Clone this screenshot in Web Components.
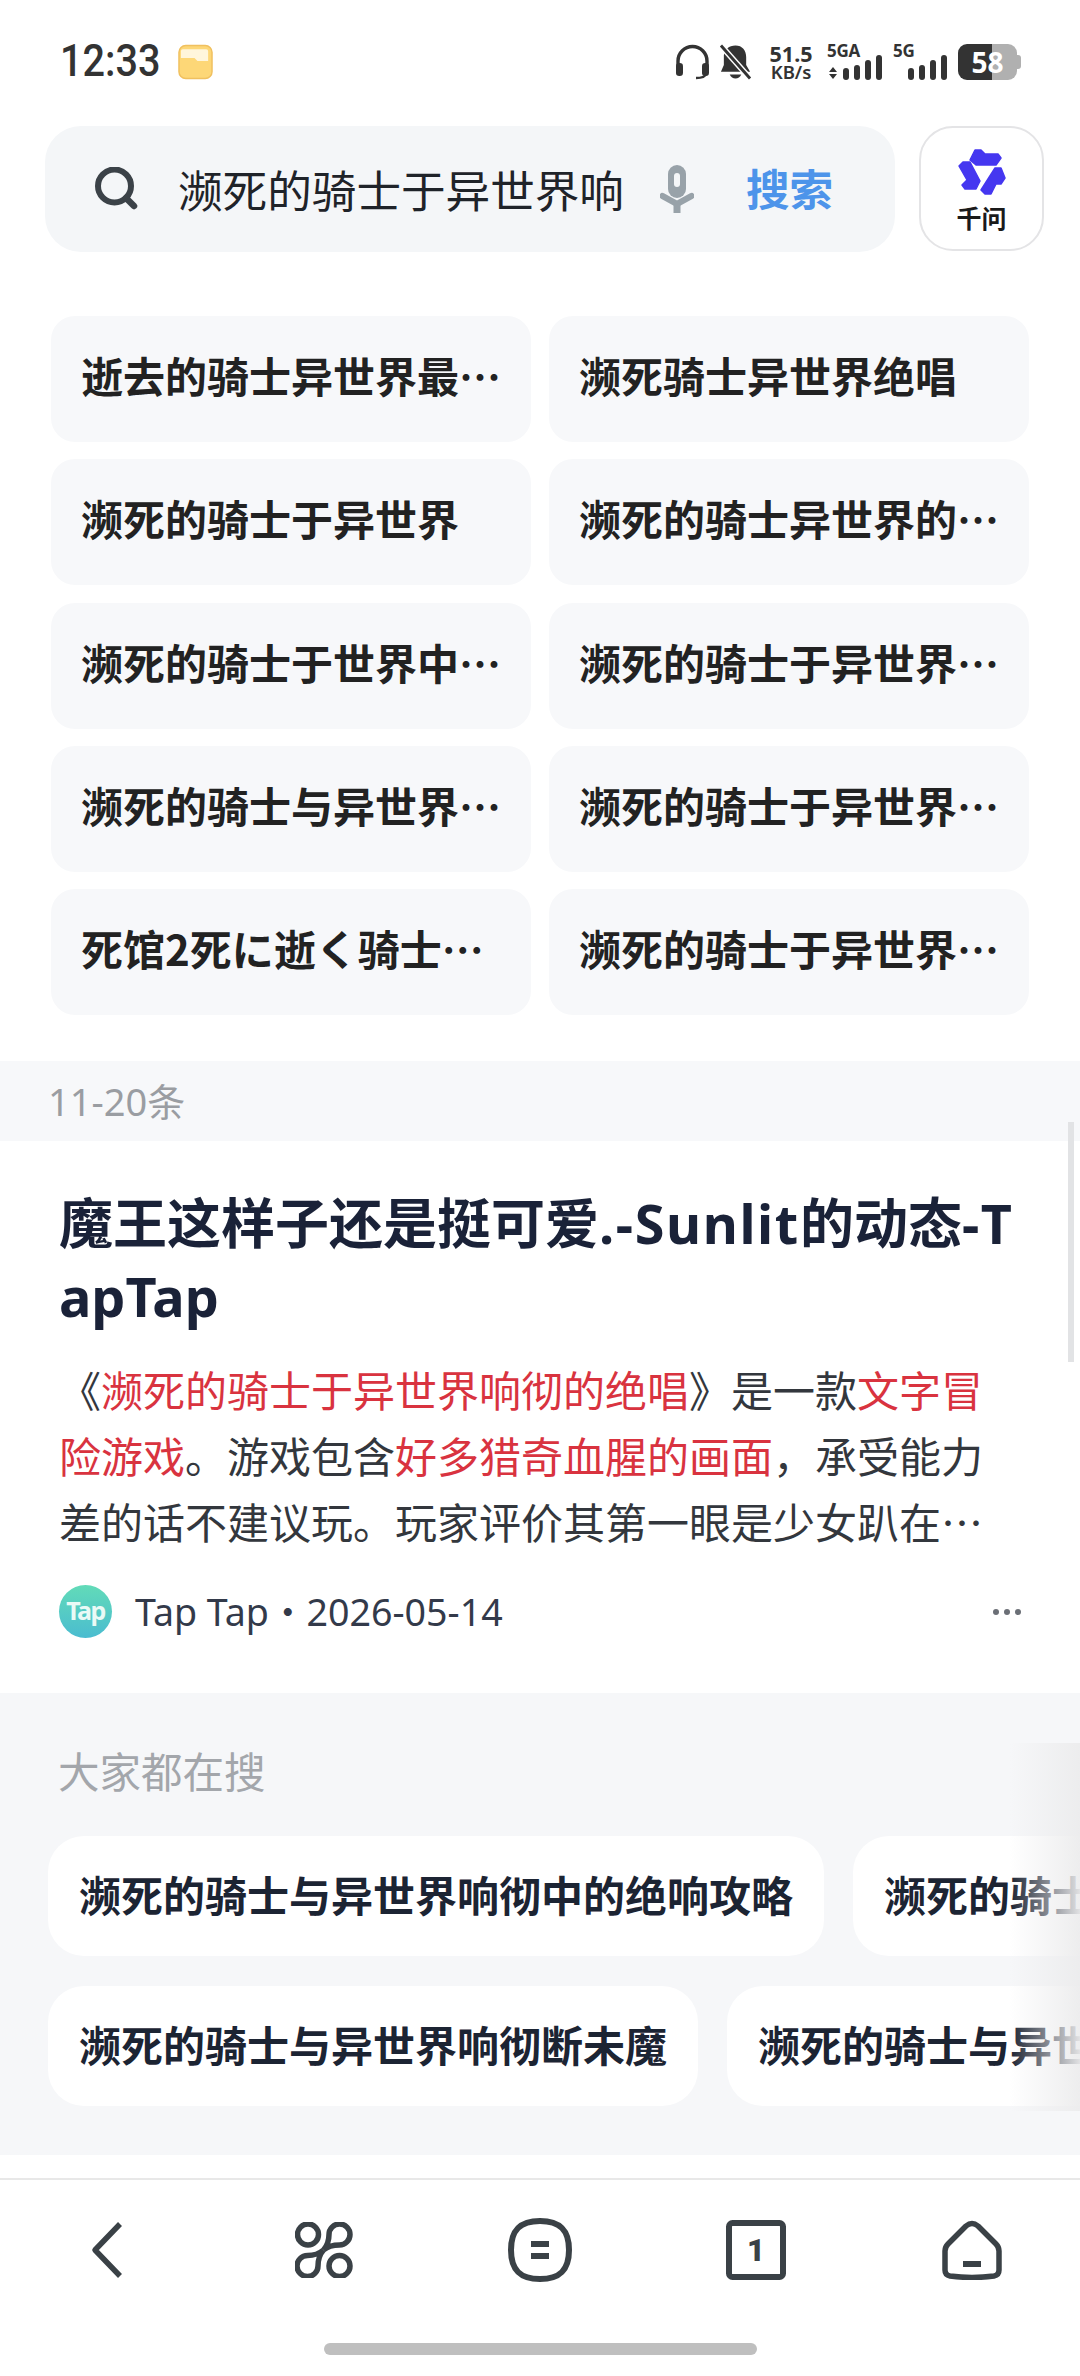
<!DOCTYPE html>
<html lang="zh-CN">
<head>
<meta charset="utf-8">
<style>
  html, body { margin: 0; padding: 0; background: #fff; }
  body { width: 1080px; height: 2376px; overflow: hidden; font-family: "Noto Sans", "Noto Sans CJK SC", sans-serif; }
  results-page { height: 2376px; }
</style>
</head>
<body>
<results-page>
  <status-bar slot="status"></status-bar>
  <search-bar slot="search"></search-bar>
  <related-grid slot="related">
    <rel-chip>逝去的骑士异世界最终绝响</rel-chip>
    <rel-chip>濒死骑士异世界绝唱</rel-chip>
    <rel-chip>濒死的骑士于异世界</rel-chip>
    <rel-chip>濒死的骑士异世界的绝响攻略</rel-chip>
    <rel-chip>濒死的骑士于世界中的绝响</rel-chip>
    <rel-chip>濒死的骑士于异世界响彻的绝唱</rel-chip>
    <rel-chip>濒死的骑士与异世界响彻绝唱</rel-chip>
    <rel-chip>濒死的骑士于异世界响彻攻略</rel-chip>
    <rel-chip>死馆2死に逝く骑士异世界</rel-chip>
    <rel-chip>濒死的骑士于异世界响彻下载</rel-chip>
  </related-grid>
  <page-divider slot="divider">11-20条</page-divider>
  <result-card slot="card"></result-card>
  <hot-search slot="hot"></hot-search>
  <bottom-nav slot="nav"></bottom-nav>
</results-page>

<script>
// page shell, stacks every section top to bottom
class ResultsPage extends HTMLElement {
  constructor() {
    super();
    this.attachShadow({ mode: 'open' });
    this.shadowRoot.innerHTML = `
    <style>
      :host { display: flex; flex-direction: column; width: 1080px; background: #fff; position: relative; }
      .grow { flex: 1; background: #fff; }
      .scroll { position: absolute; right: 6px; top: 1122px; width: 6px; height: 240px; background: #e2e3e5; }
    </style>
    <slot name="status"></slot>
    <slot name="search"></slot>
    <slot name="related"></slot>
    <slot name="divider"></slot>
    <slot name="card"></slot>
    <slot name="hot"></slot>
    <div class="grow"></div>
    <slot name="nav"></slot>
    <div class="scroll"></div>
    `;
  }
}

class StatusBar extends HTMLElement {
  constructor() {
    super();
    this.attachShadow({ mode: 'open' });
    this.shadowRoot.innerHTML = `
    <style>
      :host { display: flex; align-items: center; height: 126px; box-sizing: border-box; padding: 0 59px 2px 60px; color: #333; }
      .time { font: 500 39.6px/1 Roboto, sans-serif; color: #333; transform: scaleY(1.1); }
      .left { display: flex; align-items: center; gap: 18px; }
      .right { margin-left: auto; display: flex; align-items: center; }
      .speed { display: flex; flex-direction: column; width: 44px; align-items: center; margin-left: 17px; color: #333; }
      .speed b { font: 700 21.5px/20px "Noto Sans", sans-serif; }
      .speed span { font: 600 18.5px/16px "Noto Sans", sans-serif; }
      .net { position: relative; height: 36px; }
      .net span { position: absolute; left: 0; top: -3px; font: 700 17px/20px "Noto Sans", sans-serif; color: #333; letter-spacing: -.3px; }
      .batt { width: 59px; height: 36px; border-radius: 9px; margin-left: 11px; background: linear-gradient(90deg, #333 0 34px, #b0b0b0 34px); display: flex; align-items: center; justify-content: center; font: 700 28px/1 "Noto Sans", sans-serif; color: #fff; }
      .nub { width: 4px; height: 14px; background: #b0b0b0; border-radius: 0 3px 3px 0; }
      svg { display: block; }
    </style>
    <div class="left">
      <div class="time">12:33</div>
      <svg width="35" height="36" viewBox="0 0 36 36">
        <rect x="1" y="1" width="34" height="34" rx="7" fill="#fdd777" stroke="#f0c05f" stroke-width="1.5"/>
        <path d="M5 5 h24 q2 0 2 2 v10 h-11 l-3-3 h-14 v-7 q0-2 2-2z" fill="#fff6dc"/>
      </svg>
    </div>
    <div class="right">
      <svg width="35" height="36" viewBox="0 0 35 36" fill="none">
        <path d="M3 23 V17 a14.5 14.5 0 0 1 29 0 V23" stroke="#333" stroke-width="3.4"/>
        <rect x="1" y="19" width="7" height="13" rx="3.2" fill="#333"/>
        <rect x="27" y="19" width="7" height="13" rx="3.2" fill="#333"/>
        <path d="M31 30 q-1 4-10 4" stroke="#333" stroke-width="2.4"/>
      </svg>
      <svg style="margin-left:9px" width="33" height="36" viewBox="0 0 34 36">
        <path d="M17 1 c7 0 11 5 11 12 v8 l4 7 H2 l3-7 V11 C6 5 10 1 17 1z" fill="#333"/>
        <path d="M11 31 h12 q-2 4-6 4 t-6-4z" fill="#333"/>
        <path d="M2 1 L32 35" stroke="#fff" stroke-width="6"/>
        <path d="M2 1 L32 35" stroke="#333" stroke-width="3"/>
      </svg>
      <div class="speed"><b>51.5</b><span>KB/s</span></div>
      <div class="net" style="margin-left:14px;width:55px">
        <span>5GA</span>
        <svg width="55" height="36" viewBox="0 0 55 36">
          <path d="M2 28 l4-5 4 5z M2 30 l4 5 4-5z" fill="#333"/>
          <rect x="16" y="24" width="6" height="12" rx="3" fill="#333"/>
          <rect x="27" y="21" width="6" height="15" rx="3" fill="#333"/>
          <rect x="38" y="16" width="6" height="20" rx="3" fill="#333"/>
          <rect x="49" y="11" width="6" height="25" rx="3" fill="#333"/>
        </svg>
      </div>
      <div class="net" style="margin-left:11px;width:54px">
        <span>5G</span>
        <svg width="54" height="36" viewBox="0 0 54 36">
          <rect x="15" y="24" width="6" height="12" rx="3" fill="#333"/>
          <rect x="26" y="21" width="6" height="15" rx="3" fill="#333"/>
          <rect x="37" y="16" width="6" height="20" rx="3" fill="#333"/>
          <rect x="48" y="11" width="6" height="25" rx="3" fill="#333"/>
        </svg>
      </div>
      <div class="batt">58</div>
      <div class="nub"></div>
    </div>
    `;
  }
}

class SearchBar extends HTMLElement {
  constructor() {
    super();
    this.attachShadow({ mode: 'open' });
    this.shadowRoot.innerHTML = `
    <style>
      :host { display: flex; gap: 24px; padding: 0 36px 0 45px; height: 126px; }
      .box { flex: 1; display: flex; align-items: center; background: #f4f6f8; border-radius: 36px; padding: 0 62px 0 50px; }
      .q { font: 400 44.6px/1 "Noto Sans CJK SC", sans-serif; color: #1f2329; margin-left: 39px; white-space: nowrap; }
      .go { font: 700 43.5px/1 "Noto Sans CJK SC", sans-serif; color: #4d94ea; margin-left: 52px; padding-bottom: 2px; }
      .mic { margin-left: auto; }
      .qw { width: 125px; height: 125px; box-sizing: border-box; border: 2px solid #e4e4e6; border-radius: 34px; display: flex; flex-direction: column; align-items: center; padding-top: 20px; }
      .qw span { font: 700 25px/26px "Noto Sans CJK SC", sans-serif; color: #1a1a1a; margin-top: 8px; }
      svg { display: block; flex: none; }
    </style>
    <div class="box">
      <svg width="44" height="44" viewBox="0 0 44 44" fill="none">
        <circle cx="19.5" cy="19" r="16.5" stroke="#3b4248" stroke-width="6"/>
        <path d="M31 31 L39 39" stroke="#3b4248" stroke-width="6.5" stroke-linecap="round"/>
      </svg>
      <div class="q">濒死的骑士于异世界响</div>
      <svg class="mic" width="34" height="48" viewBox="0 0 34 48" fill="none">
        <rect x="8" y="0" width="18" height="33" rx="9" fill="#98a2a9"/>
        <rect x="14" y="8" width="6" height="14" rx="3" fill="#f4f6f8"/>
        <path d="M2.5 31 L17 39 L31.5 31" stroke="#98a2a9" stroke-width="6" stroke-linecap="round"/>
        <path d="M17 38 V48" stroke="#98a2a9" stroke-width="7"/>
      </svg>
      <div class="go">搜索</div>
    </div>
    <div class="qw">
      <svg width="48" height="48" viewBox="0 0 48 48" fill="#4537f0" stroke="#4537f0" stroke-width="1.5" stroke-linejoin="round">
        <path d="M12 12 L17 2 H23 L27 6 H40 L43 10 L38 17 H18z"/>
        <path d="M1 18 L5 14 H12 L22 33 L18 41 H7 L4 37 L9 32z"/>
        <path d="M23 42 L37 20 H43 L47 30 L43 36 H38 L33 46 H27z"/>
      </svg>
      <span>千问</span>
    </div>
    `;
  }
}

class RelatedGrid extends HTMLElement {
  constructor() {
    super();
    this.attachShadow({ mode: 'open' });
    this.shadowRoot.innerHTML = `
    <style>
      :host { display: grid; grid-template-columns: 480px 480px; column-gap: 18px; row-gap: 17.25px; padding: 64px 50px 46px 51px; grid-auto-rows: 126px; }
    </style>
    <slot></slot>
    `;
  }
}

class RelChip extends HTMLElement {
  constructor() {
    super();
    this.attachShadow({ mode: 'open' });
    this.shadowRoot.innerHTML = `
    <style>
      :host { display: flex; align-items: center; min-width: 0; background: #f7f8fa; border-radius: 24px; padding: 0 22px 7px 30px; }
      .t { font: 700 42px/1.45 "Noto Sans CJK SC", sans-serif; color: #222; white-space: nowrap; overflow: hidden; text-overflow: ellipsis; }
    </style>
    <div class="t"><slot></slot></div>
    `;
  }
}

class PageDivider extends HTMLElement {
  constructor() {
    super();
    this.attachShadow({ mode: 'open' });
    this.shadowRoot.innerHTML = `
    <style>
      :host { display: flex; align-items: center; height: 80px; background: #f7f8fa; padding-left: 48px; font: 400 38px/1 "Noto Sans", "Noto Sans CJK SC", sans-serif; color: #9a9da2; }
    </style>
    <slot></slot>
    `;
  }
}

class ResultCard extends HTMLElement {
  constructor() {
    super();
    this.attachShadow({ mode: 'open' });
    this.shadowRoot.innerHTML = `
    <style>
      :host { display: block; background: #fff; padding: 46px 50px 0 59px; height: 552px; box-sizing: border-box; }
      h2 { margin: 0; font: 700 54px/73px "Noto Sans", "Noto Sans CJK SC", sans-serif; color: #1a2238; word-break: break-all; width: 960px; }
      h2 span { letter-spacing: 1.6px; }
      .desc { margin-top: 23px; font: 400 42px/66px "Noto Sans CJK SC", sans-serif; color: #33373d; height: 200px; white-space: nowrap; }
      em { font-style: normal; color: #d9333f; }
      .src { display: flex; align-items: center; margin-top: 29px; font: 400 37.6px/1 "Noto Sans", "Noto Sans CJK SC", sans-serif; color: #333a4a; }
      .logo { width: 53px; height: 53px; border-radius: 50%; background: linear-gradient(180deg, #62dbb8, #4abcd0); color: #eafaf6; font: 700 25px/51px "Noto Sans", sans-serif; text-align: center; margin-right: 23px; letter-spacing: -1.5px; }
      .more { margin-left: auto; margin-right: 9px; display: flex; gap: 5px; }
      .more i { width: 6px; height: 6px; border-radius: 50%; background: #6b6f76; }
    </style>
    <h2>魔王这样子还是挺可爱<span>.-Sunlit</span>的动态<span>-T</span>apTap</h2>
    <div class="desc">
      <div>《<em>濒死的骑士于异世界响彻的绝唱</em>》是一款<em>文字冒</em></div>
      <div><em>险游戏</em>。游戏包含<em>好多猎奇血腥的画面</em>，承受能力</div>
      <div>差的话不建议玩。玩家评价其第一眼是少女趴在…</div>
    </div>
    <div class="src">
      <div class="logo">Tap</div>
      <span>Tap Tap・2026-05-14</span>
      <div class="more"><i></i><i></i><i></i></div>
    </div>
    `;
  }
}

class HotSearch extends HTMLElement {
  constructor() {
    super();
    this.attachShadow({ mode: 'open' });
    this.shadowRoot.innerHTML = `
    <style>
      :host { display: block; position: relative; background: #f6f7f9; height: 462px; box-sizing: border-box; padding: 55px 0 0 48px; overflow: hidden; }
      .h { font: 400 41.5px/44px "Noto Sans CJK SC", sans-serif; color: #a3a6ab; margin-left: 10px; }
      .row { display: flex; gap: 29px; margin-top: 44px; white-space: nowrap; }
      .row + .row { margin-top: 30px; }
      .p { flex: none; height: 120px; box-sizing: border-box; background: #fff; border-radius: 36px; padding: 0 31px 4px; display: flex; align-items: center; font: 700 42px/1 "Noto Sans CJK SC", sans-serif; color: #1c2433; }
      .fade { position: absolute; right: 0; top: 50px; bottom: 44px; width: 70px; background: linear-gradient(90deg, rgba(240,240,241,0), rgba(236,236,237,.95)); }
    </style>
    <div class="h">大家都在搜</div>
    <div class="row"><div class="p">濒死的骑士与异世界响彻中的绝响攻略</div><div class="p">濒死的骑士与异世界</div></div>
    <div class="row"><div class="p">濒死的骑士与异世界响彻断未魔</div><div class="p">濒死的骑士与异世界</div></div>
    <div class="fade"></div>
    `;
  }
}

class BottomNav extends HTMLElement {
  constructor() {
    super();
    this.attachShadow({ mode: 'open' });
    this.shadowRoot.innerHTML = `
    <style>
      :host { display: block; background: #fff; border-top: 2px solid #e8e8e8; height: 198px; box-sizing: border-box; }
      .icons { display: grid; grid-template-columns: repeat(5, 216px); height: 140px; align-items: center; justify-items: center; margin-bottom: 23px; }
      .bar { width: 433px; height: 12px; border-radius: 6px; background: #bfbfbf; margin: 0 auto; }
      svg { display: block; }
    </style>
    <div class="icons">
      <svg width="64" height="64" viewBox="0 0 64 64" fill="none" stroke="#3a4146" stroke-width="5.5">
        <path d="M44 6 L19 32 L44 58" stroke-linejoin="round"/>
      </svg>
      <svg width="58" height="56" viewBox="0 0 58 56" fill="none" stroke="#3a4146" stroke-width="5.5">
        <circle cx="13" cy="12.5" r="10.5"/>
        <circle cx="44.5" cy="44" r="10.5"/>
        <path d="M28.5 28 C32 24 34 20 34 12.5 A10.5 10.5 0 1 1 44.5 23 C36 23 32 25 28.5 28"/>
        <path d="M28.5 28 C25 32 23 36 23 44 A10.5 10.5 0 1 1 12.5 33.5 C21 33.5 25 31 28.5 28"/>
      </svg>
      <svg width="64" height="64" viewBox="0 0 64 64" fill="none">
        <path d="M32 3 C52 3 61 12 61 32 S52 61 32 61 S3 52 3 32 S12 3 32 3z" stroke="#3a4146" stroke-width="6"/>
        <path d="M23 26 H41 M23 38 H41" stroke="#3a4146" stroke-width="6"/>
      </svg>
      <svg width="60" height="60" viewBox="0 0 60 60" fill="none">
        <rect x="3" y="3" width="54" height="54" rx="3.5" stroke="#3a4146" stroke-width="6"/>
        <text x="30" y="41" text-anchor="middle" font-family="Roboto, sans-serif" font-weight="900" font-size="31" fill="#3a4146">1</text>
      </svg>
      <svg width="60" height="60" viewBox="0 0 60 60" fill="none" stroke="#3a4146" stroke-width="5.5">
        <path d="M24 6 Q30 1 36 6 L54 24 Q57 27 57 31 V50 Q57 55 52 56 Q30 59 8 56 Q3 55 3 50 V31 Q3 27 6 24z" stroke-linejoin="round"/>
        <path d="M21 44 H39" stroke-width="6"/>
      </svg>
    </div>
    <div class="bar"></div>
    `;
  }
}

customElements.define('results-page', ResultsPage);
customElements.define('status-bar', StatusBar);
customElements.define('search-bar', SearchBar);
customElements.define('related-grid', RelatedGrid);
customElements.define('rel-chip', RelChip);
customElements.define('page-divider', PageDivider);
customElements.define('result-card', ResultCard);
customElements.define('hot-search', HotSearch);
customElements.define('bottom-nav', BottomNav);
</script>
</body>
</html>
